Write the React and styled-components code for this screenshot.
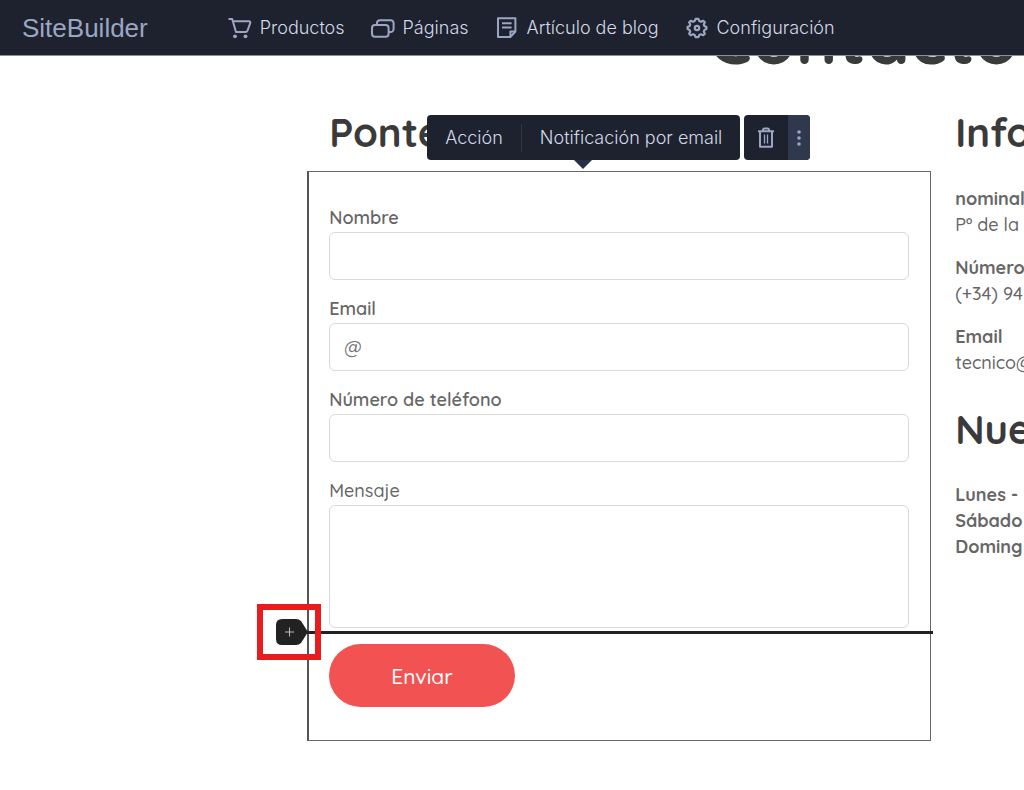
import React from 'react';
import styled, { createGlobalStyle } from 'styled-components';

const GlobalStyle = createGlobalStyle`
  * {
    box-sizing: border-box;
  }

  body {
    margin: 0;
    background-color: #fff;
    color: #666;
    font-family: Quicksand, Lato, sans-serif;
    font-size: 18px;
    font-weight: 500;
    line-height: 26px;
  }
`;

const Page = styled.div`
  min-height: 100vh;
  overflow: hidden;
`;

const Header = styled.header`
  position: relative;
  z-index: 2;
  display: flex;
  align-items: center;
  gap: 80px;
  height: 56px;
  padding: 0 22px;
  background-color: #1d222e;
  border-bottom: 1px solid #8a8e96;
`;

const Logo = styled.a`
  color: #9ca6c2;
  font-family: 'Liberation Sans', Arial, sans-serif;
  font-size: 26px;
  font-weight: 400;
  text-decoration: none;
`;

const Nav = styled.nav`
  display: flex;
  gap: 26px;
`;

const NavLink = styled.a`
  display: flex;
  align-items: center;
  gap: 8px;
  color: #d3d9e8;
  font-family: Inter, sans-serif;
  font-size: 18px;
  font-weight: 300;
  text-decoration: none;
  white-space: nowrap;
`;

const Icon = styled.svg`
  display: block;
  flex: none;
  width: 24px;
  height: 24px;
  fill: none;
  stroke: #9ca6c2;
  stroke-width: 2;
  stroke-linejoin: round;
`;

const Canvas = styled.main`
  min-width: 1112px;
  margin-left: 30%;
`;

const Title = styled.h1`
  margin: -54px 0 34px;
  color: #3a3a3a;
  font-size: 70px;
  font-weight: 700;
  line-height: 72px;
  text-align: center;
`;

const Columns = styled.div`
  display: grid;
  grid-template-columns: 624px 1fr;
  align-items: start;
  column-gap: 24px;
`;

const Heading = styled.h2`
  margin: 0 0 ${(props) => props.$space}px;
  padding-left: ${(props) => (props.$inset ? 22 : 0)}px;
  color: #3a3a3a;
  font-size: 40px;
  font-weight: 700;
  line-height: 48px;
  white-space: nowrap;
`;

const FormFrame = styled.div`
  position: relative;
  padding: 33px 21px 33px 20px;
  border: 1px solid #666;
  border-left: 2px solid #555;
`;

const Field = styled.div`
  display: flex;
  flex-direction: column;
  gap: 1px;
  margin-bottom: 16px;
`;

const Label = styled.label`
  font-weight: ${(props) => (props.$light ? 500 : 600)};
`;

const Input = styled.input`
  width: 100%;
  height: 48px;
  padding: 0 14px;
  background-color: #fff;
  border: 1px solid #d9d9d9;
  border-radius: 6px;
  color: #666;
  font: inherit;

  &::placeholder {
    color: #757575;
    opacity: 1;
  }
`;

const TextArea = styled(Input)`
  height: 123px;
  padding: 12px 14px;
  resize: none;
`;

const SubmitRow = styled.div`
  position: relative;
`;

const SubmitButton = styled.button`
  display: block;
  height: 63px;
  padding: 0 62px;
  background-color: #f35252;
  border: 0;
  border-radius: 32px;
  color: #fff;
  font: inherit;
  font-size: 21px;
`;

const InsertLine = styled.div`
  position: absolute;
  top: -13px;
  left: -22px;
  right: -24px;
  height: 3px;
  background-color: #222;
`;

const InsertHighlight = styled.div`
  position: absolute;
  top: -40px;
  left: -72px;
  display: flex;
  align-items: center;
  width: 64px;
  height: 56px;
  padding-left: 13px;
  border: 6px solid #e81c1c;
`;

const InsertButton = styled.button`
  display: block;
  padding: 0;
  background: none;
  border: 0;
`;

const InsertIcon = styled.svg`
  display: block;
  width: 32px;
  height: 28px;
`;

const Toolbar = styled.div`
  position: absolute;
  bottom: calc(100% + 12px);
  left: 118px;
  display: flex;
  gap: 4px;
`;

const ToolGroup = styled.div`
  position: relative;
  display: flex;
  align-items: center;
  height: 45px;
  background-color: #1d222e;
  border-radius: 4px;
`;

const ToolArrow = styled.svg`
  position: absolute;
  top: 100%;
  left: 50%;
  width: 18px;
  height: 9px;
  margin-left: -10px;
`;

const ToolButton = styled.button`
  height: 28px;
  padding: 0 18px;
  background: none;
  border: 0;
  color: #d3d9e8;
  font-family: Inter, sans-serif;
  font-size: 18px;
  font-weight: 300;
  white-space: nowrap;

  & + & {
    border-left: 1px solid #2e364a;
  }
`;

const IconButton = styled.button`
  display: flex;
  align-items: center;
  justify-content: center;
  width: ${(props) => (props.$narrow ? 22 : 44)}px;
  height: 100%;
  padding: 0;
  background-color: ${(props) => (props.$narrow ? '#30384d' : 'transparent')};
  border: 0;
  border-radius: 0 4px 4px 0;
`;

const Info = styled.p`
  margin: 0 0 ${(props) => (props.$last ? 29 : 17)}px;
  white-space: nowrap;
`;

const Strong = styled.strong`
  font-weight: 700;
`;

const CartIcon = () => (
  <Icon viewBox="0 0 24 24" aria-hidden="true">
    <path d="M0.5 3H4.2L8 16H17.6Q19 16 19.5 14.7L22.2 7.2Q22.8 5.2 20.8 5.2H5" />
    <circle cx="7" cy="20.3" r="1.9" fill="#9ca6c2" stroke="none" />
    <circle cx="17.5" cy="20.3" r="1.9" fill="#9ca6c2" stroke="none" />
  </Icon>
);

const PagesIcon = () => (
  <Icon viewBox="0 0 24 24" aria-hidden="true">
    <rect x="1" y="9" width="16.6" height="11.8" rx="3" />
    <path d="M6 9V7.2A3 3 0 0 1 9 4.2H19.6A3 3 0 0 1 22.6 7.2V13A3 3 0 0 1 19.6 16H18" />
  </Icon>
);

const ArticleIcon = () => (
  <Icon viewBox="0 0 24 24" aria-hidden="true">
    <path d="M3 2.2H20.4V15.5L15.4 21H3Z" />
    <path d="M20.4 15.5H15.4V21M7 7.3H16.6M7 11.5H16.6" />
  </Icon>
);

const GearIcon = () => (
  <Icon viewBox="0 0 24 24" aria-hidden="true">
    <path d="M10.6 2.8H13.4L14.3 5.1L16 5.8L18.3 4.8L19.8 6.3L18.8 8.6L19.5 10.2L21.4 10.9V13.1L19.5 13.9L18.8 15.5L19.8 17.7L18.3 19.2L16 18.3L14.3 19L13.4 21.2H10.6L9.7 19L8 18.3L5.7 19.2L4.2 17.7L5.2 15.5L4.5 13.9L2.6 13.1V10.9L4.5 10.2L5.2 8.6L4.2 6.3L5.7 4.8L8 5.8L9.7 5.1Z" strokeWidth="2.2" />
    <circle cx="12" cy="12" r="2.2" strokeWidth="2.2" />
  </Icon>
);

const TrashIcon = () => (
  <Icon viewBox="0 0 24 24" aria-hidden="true">
    <path d="M4 5.2H20M6 5.2V20.8H18V5.2M9 5V4Q9 2.6 10.4 2.6H13.6Q15 2.6 15 4V5" />
    <path d="M10.5 8.5V17.5M13.5 8.5V17.5" strokeWidth="1.3" />
  </Icon>
);

const DotsIcon = () => (
  <Icon viewBox="0 0 24 24" aria-hidden="true">
    <g fill="#9ca6c2" stroke="none">
      <circle cx="12" cy="6" r="1.8" />
      <circle cx="12" cy="12" r="1.8" />
      <circle cx="12" cy="18" r="1.8" />
    </g>
  </Icon>
);

const App = () => {
  return (
    <Page>
      <GlobalStyle />
      <Header>
        <Logo href="#">SiteBuilder</Logo>
        <Nav>
          <NavLink href="#productos"><CartIcon />Productos</NavLink>
          <NavLink href="#paginas"><PagesIcon />Páginas</NavLink>
          <NavLink href="#blog"><ArticleIcon />Artículo de blog</NavLink>
          <NavLink href="#configuracion"><GearIcon />Configuración</NavLink>
        </Nav>
      </Header>
      <Canvas>
        <Title>Contacto</Title>
        <Columns>
          <section>
            <Heading $inset $space={15}>Ponte</Heading>
            <FormFrame>
              <Toolbar>
                <ToolGroup>
                  <ToolButton type="button">Acción</ToolButton>
                  <ToolButton type="button">Notificación por email</ToolButton>
                  <ToolArrow viewBox="0 0 18 9" aria-hidden="true">
                    <path d="M0 0H18L9 9Z" fill="#2a3044" />
                  </ToolArrow>
                </ToolGroup>
                <ToolGroup>
                  <IconButton type="button" aria-label="Eliminar"><TrashIcon /></IconButton>
                  <IconButton type="button" aria-label="Más opciones" $narrow><DotsIcon /></IconButton>
                </ToolGroup>
              </Toolbar>
              <form>
                <Field>
                  <Label htmlFor="nombre">Nombre</Label>
                  <Input id="nombre" type="text" />
                </Field>
                <Field>
                  <Label htmlFor="email">Email</Label>
                  <Input id="email" type="email" placeholder="@" />
                </Field>
                <Field>
                  <Label htmlFor="telefono">Número de teléfono</Label>
                  <Input id="telefono" type="tel" />
                </Field>
                <Field>
                  <Label htmlFor="mensaje" $light>Mensaje</Label>
                  <TextArea as="textarea" id="mensaje" />
                </Field>
                <SubmitRow>
                  <InsertLine />
                  <InsertHighlight>
                    <InsertButton type="button" aria-label="Añadir campo">
                      <InsertIcon viewBox="0 0 32 28" aria-hidden="true">
                        <path d="M6 1H20Q23 1 25 3L32 14L25 25Q23 27 20 27H6Q0 27 0 21V7Q0 1 6 1Z" fill="#222" />
                        <path d="M9 14H18M13.5 9.5V18.5" stroke="#bbb" />
                      </InsertIcon>
                    </InsertButton>
                  </InsertHighlight>
                  <SubmitButton type="submit">Enviar</SubmitButton>
                </SubmitRow>
              </form>
            </FormFrame>
          </section>
          <section>
            <Heading $space={30}>Info</Heading>
            <Info><Strong>nominal</Strong><br />Pº de la</Info>
            <Info><Strong>Número</Strong><br />(+34) 94</Info>
            <Info $last><Strong>Email</Strong><br />tecnico@</Info>
            <Heading $space={29}>Nue</Heading>
            <Info>
              <Strong>Lunes -<br />Sábado<br />Doming</Strong>
            </Info>
          </section>
        </Columns>
      </Canvas>
    </Page>
  );
};

export default App;
